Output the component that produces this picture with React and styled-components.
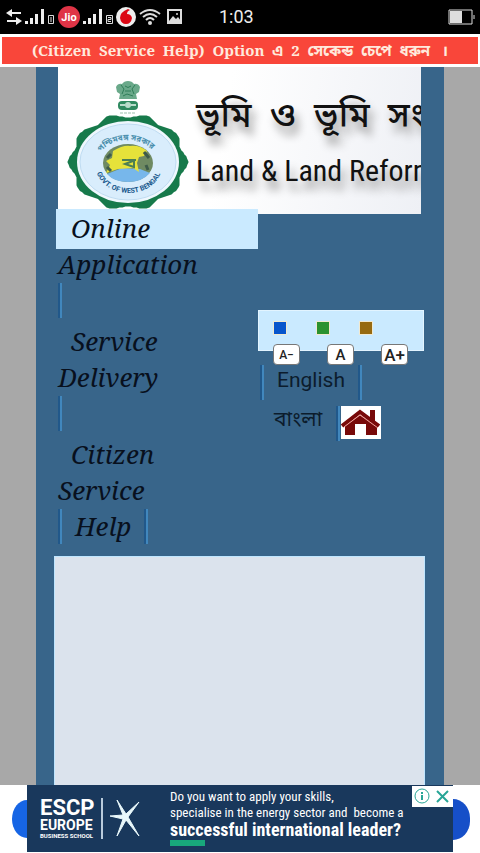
import React from "react";
import styled, { createGlobalStyle } from "styled-components";

const BENGALI = '"Noto Sans Bengali", "Lohit Bengali", "Noto Sans"';

const Global = createGlobalStyle`
  * { box-sizing: border-box; }
  body { margin: 0; background: #fff; font-family: Roboto, ${BENGALI}, sans-serif; }
  ul { list-style: none; margin: 0; padding: 0; }
  a { color: inherit; text-decoration: none; }
  button { padding: 0; font-family: inherit; cursor: pointer; }
`;

const Screen = styled.div`
  display: flex;
  flex-direction: column;
  height: 100vh;
  overflow: hidden;
`;

const StatusBar = styled.header`
  display: flex;
  align-items: center;
  justify-content: space-between;
  height: 34px;
  padding: 0 5px;
  background: #000;
  color: #eee;
`;

const StatusGroup = styled.div`
  display: flex;
  align-items: center;
  gap: 2px;
`;

const Clock = styled.time`
  margin-left: 32px;
  font-size: 18px;
  line-height: 34px;
`;

const Notice = styled.p`
  margin: 3px 2px;
  padding: 0 4px;
  height: 27px;
  background: #f9463a;
  color: #ffe9dc;
  font: 700 15px/26px "Noto Serif", "DejaVu Serif Condensed", ${BENGALI}, serif;
  text-align: center;
  white-space: pre;
  overflow: hidden;
`;

const Backdrop = styled.main`
  display: flex;
  flex: 1;
  min-height: 0;
  padding: 0 36px;
  background: #a8a8a8;
`;

const Page = styled.div`
  display: flex;
  flex: 1;
  min-width: 0;
  flex-direction: column;
  padding: 0 19px 0 18px;
  background: #38658a;
`;

const Masthead = styled.div`
  display: flex;
  flex: none;
  height: 147px;
  margin: 0 4px;
  overflow: hidden;
  background: linear-gradient(100deg, #fff 45%, #eef0f5 100%);
`;

const Emblem = styled.svg`
  flex: none;
  width: 138px;
  height: 147px;
`;

const Titles = styled.div`
  padding-top: 23px;
  color: #111;
  white-space: pre;
  text-shadow: 4px 9px 9px #999;
`;

const BengaliTitle = styled.div`
  font: 500 35px/56px ${BENGALI}, sans-serif;
`;

const EnglishTitle = styled.div`
  font: 30px/50px "Roboto Condensed", Roboto, sans-serif;
`;

const Columns = styled.div`
  display: flex;
  flex: none;
  align-items: flex-start;
  margin: -5px 1px 0 2px;
`;

const Nav = styled.nav`
  flex: 1;
  padding-top: 2px;
  background: linear-gradient(#caeaff, #caeaff) no-repeat top / 100% 40px;
  color: #08101d;
  font: italic 26px/34px "Noto Serif", "Liberation Serif", serif;
`;

const NavItem = styled.li`
  margin-bottom: 5px;
  padding-left: 2px;
`;

const NavLine = styled.span`
  display: block;
  height: 36px;
  padding-left: ${(p) => (p.$indent ? "13px" : "0")};
`;

const Bar = styled.i`
  display: block;
  flex: none;
  width: 4px;
  height: 35px;
  border-left: 2px solid #21588a;
  border-right: 2px solid #4187bd;
`;

const HelpRow = styled.span`
  display: flex;
  gap: 13px;
  height: 36px;
`;

const Side = styled.aside`
  width: 166px;
  margin-top: 101px;
  color: #0c1c2c;
`;

const Tools = styled.div`
  height: 41px;
  padding: 10px 14px;
  border: 1px solid #e2f4ff;
  background: #caeaff;
`;

const Swatches = styled.div`
  display: flex;
  gap: 29px;
`;

const Swatch = styled.button`
  width: 14px;
  height: 14px;
  border: 1px solid #f1e9d0;
  background: ${(p) => p.$color};
`;

const Sizes = styled.div`
  display: flex;
  gap: 27px;
  margin-top: 9px;
`;

const SizeButton = styled.button`
  width: 27px;
  height: 21px;
  border: 1px solid #777;
  border-radius: 4px;
  background: #fff;
  color: #222;
  font-size: ${(p) => p.$size}px;
  font-weight: 500;
  line-height: 20px;
  white-space: nowrap;
`;

const LanguageRow = styled.div`
  display: flex;
  align-items: flex-start;
  gap: ${(p) => (p.$home ? "0" : "13px")};
  padding-left: ${(p) => (p.$home ? "16px" : "2px")};
  margin-top: ${(p) => (p.$home ? "6px" : "14px")};
  font-size: 21px;
  line-height: 30px;
`;

const BengaliLink = styled.a`
  width: 62px;
  font-family: ${BENGALI}, sans-serif;
  font-size: 21px;
`;

const HomeLink = styled.a`
  display: flex;
  margin-left: 1px;
  background: #fff;
`;

const Content = styled.section`
  flex: 1;
  margin-top: 6px;
  border: 1px solid #bfe6ff;
  border-bottom: 0;
  background: #dbe3ed;
`;

const AdStrip = styled.footer`
  display: flex;
  height: 68px;
  padding: 0 10px 0 12px;
  align-items: center;
  justify-content: space-between;
`;

const Cap = styled.i`
  flex: none;
  width: ${(p) => (p.$right ? "17px" : "15px")};
  height: ${(p) => (p.$right ? "41px" : "38px")};
  background: ${(p) => (p.$right ? "#164fc8" : "#1665e5")};
  border-radius: ${(p) => (p.$right ? "0 18px 18px 0 / 0 20px 20px 0" : "15px 0 0 15px / 19px 0 0 19px")};
`;

const Ad = styled.a`
  position: relative;
  display: flex;
  flex: 1;
  height: 67px;
  align-self: flex-start;
  background: #19385c;
  color: #fff;
`;

const School = styled.div`
  display: flex;
  flex-direction: column;
  width: 63px;
  margin: 13px 0 13px 13px;
  border-right: 2px solid #b9cbdc;
  font-weight: 700;
  white-space: nowrap;
`;

const SchoolLine = styled.span`
  font-size: ${(p) => p.$size}px;
  line-height: ${(p) => p.$line}px;
`;

const Star = styled.svg`
  flex: none;
  width: 34px;
  height: 42px;
  margin: 12px 28px 0 5px;
`;

const Copy = styled.div`
  display: flex;
  flex-direction: column;
  padding-top: 4px;
  font: 400 13px/16px "Roboto Condensed", Roboto, sans-serif;
  white-space: pre;
`;

const Headline = styled.strong`
  font-size: 18px;
  line-height: 17px;
`;

const Accent = styled.i`
  width: 35px;
  height: 6px;
  margin-top: 2px;
  background: #18a77b;
`;

const AdChoices = styled.svg`
  position: absolute;
  top: 1px;
  right: 0;
  width: 41px;
  height: 21px;
  background: #fff;
`;

function Signal({ sim }) {
  return (
    <svg width="31" height="18" viewBox="0 0 31 18" fill="#eee" aria-hidden="true">
      <path d="M0 13h3v3H0zM5 10h3v6H5zM10 6h3v10h-3zM16 1h3v15h-3z" />
      {sim === 2 ? (
        <path d="M23.5 7.500h6v8h-6zM25 9.500h3v2h-3v2h3" fill="none" stroke="#ddd" />
      ) : (
        <path d="M23.500 7.500h5v8h-5zM26 9v5" fill="none" stroke="#ddd" />
      )}
    </svg>
  );
}

const SEAL_OUTLINE = (() => {
  const points = [];
  for (let i = 0; i < 120; i += 1) {
    const t = (i / 120) * Math.PI * 2;
    const r = 1 + 0.045 * Math.cos(10 * t);
    points.push(`${Math.round(70 + 56 * r * Math.cos(t))},${Math.round(95 + 45 * r * Math.sin(t))}`);
  }
  return points.join(" ");
})();

function StateEmblem() {
  return (
    <Emblem viewBox="0 0 138 147" role="img" aria-label="Government of West Bengal">
      <path d="M58 20q2-4 6-3 2-3 6-3t6 3q4-1 6 3l-1 5-3 2 1 5H61l1-5-3-2z" fill="#6aa98a" />
      <path d="M63 18l3 4-2 5M77 18l-3 4 2 5M67 19q3 3 6 0M67 24h6M65 29l4-2 6 2" stroke="#2f7d58" fill="none" />
      <rect x="60" y="34" width="20" height="9" rx="4" fill="#2f8a60" />
      <circle cx="70" cy="38" r="3" fill="#b9dccb" />
      <path d="M62 38h5M73 38h5" stroke="#b9dccb" strokeWidth="2" />
      <path d="M62 46h16" stroke="#9dbfae" strokeDasharray="3 1" />
      <polygon points={SEAL_OUTLINE} fill="#177a4b" strokeLinejoin="round" stroke="#177a4b" strokeWidth="3" />
      <ellipse cx="70" cy="95" rx="51" ry="41" fill="#eef7fd" />
      <ellipse cx="70" cy="95" rx="48" ry="38" fill="#d9edfc" stroke="#bfdcf2" />
      <ellipse cx="70" cy="96" rx="25" ry="19" fill="#6f8a62" />
      <path d="M49 107q7 8 21 8t22-9l-10-4-18-1z" fill="#77b7eb" />
      <path d="M55 84q10-6 17-5 10-1 17 5l-3 5-5 1-2 6 2 9-6-4-15 1-12 4 4-8-4-4 6-3z" fill="#e6e23a" />
      <path d="M64 93h14M76 93v7l-9-3 8-3" stroke="#4d7f52" strokeWidth="2" fill="none" />
      <path d="M49 91l4-4M86 85l5 6M88 98l2 5M49 100l4 4" stroke="#3e5b4a" strokeWidth="3" fill="none" />
      <path id="upper-arc" d="M43 85a31 25 0 0 1 53 0" fill="none" />
      <path id="lower-arc" d="M39 106a33 27 0 0 0 64 -1" fill="none" />
      <text fontSize="8" fontWeight="700" fill="#4a8fad"><textPath href="#upper-arc">পশ্চিমবঙ্গ সরকার</textPath></text>
      <text fontSize="7" fontWeight="700" fill="#18588c"><textPath href="#lower-arc">GOVT. OF WEST BENGAL</textPath></text>
    </Emblem>
  );
}

export default function App() {
  return (
    <Screen>
      <Global />
      <StatusBar>
        <StatusGroup>
          <svg width="18" height="18" viewBox="0 0 18 18" fill="#eee" aria-hidden="true">
            <path d="M1 5l6-4v3h9v2H7v3zM17 13l-6-4v3H2v2h9v3z" />
          </svg>
          <Signal sim={1} />
          <svg width="23" height="24" viewBox="0 0 23 24" role="img" aria-label="Jio">
            <circle cx="11" cy="12" r="11" fill="#df3446" />
            <text x="11" y="16" textAnchor="middle" fontSize="11" fontWeight="700" fill="#fff">Jio</text>
          </svg>
          <Signal sim={2} />
          <svg width="21" height="22" viewBox="0 0 21 22" role="img" aria-label="Vodafone">
            <circle cx="10" cy="11" r="10" fill="#eee" />
            <path d="M12 3q-8 3-8 9 1 6 6 6t6-6q-1-4-5-4 0-3 3-4z" fill="#dc0714" />
          </svg>
          <svg width="22" height="18" viewBox="0 0 22 18" fill="none" stroke="#ddd" strokeWidth="2" role="img" aria-label="Wi-Fi">
            <path d="M1 6q10-8 20 0M4 9q7-6 14 0M7 12q4-4 8 0" />
            <circle cx="11" cy="15" r="2" fill="#ddd" stroke="none" />
          </svg>
          <svg width="22" height="18" viewBox="0 0 22 18" role="img" aria-label="Screenshot saved">
            <path d="M5 2h13v13H5z" fill="none" stroke="#ddd" strokeWidth="2" />
            <path d="M6 13l4-5 3 3 2-2 3 4v1H6z" fill="#ddd" />
            <circle cx="14" cy="6" r="1" fill="#ddd" />
          </svg>
          <Clock>1:03</Clock>
        </StatusGroup>
        <svg width="27" height="17" viewBox="0 0 27 17" role="img" aria-label="Battery">
          <path d="M1 1h23v14H1zM26 6v4" fill="none" stroke="#ddd" />
          <path d="M2 2h12v12H2z" fill="#ddd" />
        </svg>
      </StatusBar>
      <Notice>(Citizen  Service  Help)  Option  এ  2  সেকেন্ড  চেপে  ধরুন   ।</Notice>
      <Backdrop>
        <Page>
          <Masthead>
            <StateEmblem />
            <Titles>
              <BengaliTitle>ভূমি  ও  ভূমি  সং</BengaliTitle>
              <EnglishTitle>Land &amp; Land Reform</EnglishTitle>
            </Titles>
          </Masthead>
          <Columns>
            <Nav>
              <ul>
                <NavItem>
                  <a href="#application">
                    <NavLine $indent>Online</NavLine>
                    <NavLine>Application</NavLine>
                  </a>
                  <NavLine><Bar /></NavLine>
                </NavItem>
                <NavItem>
                  <a href="#delivery">
                    <NavLine $indent>Service</NavLine>
                    <NavLine>Delivery</NavLine>
                  </a>
                  <NavLine><Bar /></NavLine>
                </NavItem>
                <NavItem>
                  <a href="#help">
                    <NavLine $indent>Citizen</NavLine>
                    <NavLine>Service</NavLine>
                    <HelpRow><Bar />Help<Bar /></HelpRow>
                  </a>
                </NavItem>
              </ul>
            </Nav>
            <Side>
              <Tools>
                <Swatches>
                  <Swatch $color="#0755cc" aria-label="Blue theme" />
                  <Swatch $color="#2b922f" aria-label="Green theme" />
                  <Swatch $color="#966a10" aria-label="Brown theme" />
                </Swatches>
                <Sizes>
                  <SizeButton $size={12}>A−</SizeButton>
                  <SizeButton $size={15}>A</SizeButton>
                  <SizeButton $size={17}>A+</SizeButton>
                </Sizes>
              </Tools>
              <LanguageRow>
                <Bar />
                <a href="#english">English</a>
                <Bar />
              </LanguageRow>
              <LanguageRow $home>
                <BengaliLink href="#bangla">বাংলা</BengaliLink>
                <Bar />
                <HomeLink href="#home" aria-label="Home">
                  <svg width="40" height="33" viewBox="0 0 40 33">
                    <path d="M29 4h5v12h-5zM4 20L19 9l17 11v9H25V18H14v11H4z" fill="#780909" />
                    <path d="M1 20L19 6l19 14" fill="none" stroke="#780909" strokeWidth="4" />
                    <path d="M3 21L19 9l18 13" fill="none" stroke="#f2a09a" />
                  </svg>
                </HomeLink>
              </LanguageRow>
            </Side>
          </Columns>
          <Content />
        </Page>
      </Backdrop>
      <AdStrip>
        <Cap />
        <Ad href="#ad">
          <School>
            <SchoolLine $size={22} $line={20}>ESCP</SchoolLine>
            <SchoolLine $size={14} $line={14}>EUROPE</SchoolLine>
            <SchoolLine $size={6} $line={7}>BUSINESS SCHOOL</SchoolLine>
          </School>
          <Star viewBox="0 0 34 42" aria-hidden="true">
            <path d="M9 3l9 14L31 5 20 20 31 39 18 23 9 39l6-17-13-3 13-1z" fill="#e9f8fb" stroke="#e9f8fb" strokeLinejoin="round" />
          </Star>
          <Copy>
            <span>Do you want to apply your skills,</span>
            <span>specialise in the energy sector and  become a</span>
            <Headline>successful international leader?</Headline>
            <Accent />
          </Copy>
          <AdChoices viewBox="0 0 41 21" fill="none" stroke="#28a596" strokeWidth="2" aria-hidden="true">
            <circle cx="10" cy="10" r="7" strokeWidth="1" />
            <path d="M10 9v5M10 6v2M25 5l11 11M36 5L25 16" />
          </AdChoices>
        </Ad>
        <Cap $right />
      </AdStrip>
    </Screen>
  );
}
